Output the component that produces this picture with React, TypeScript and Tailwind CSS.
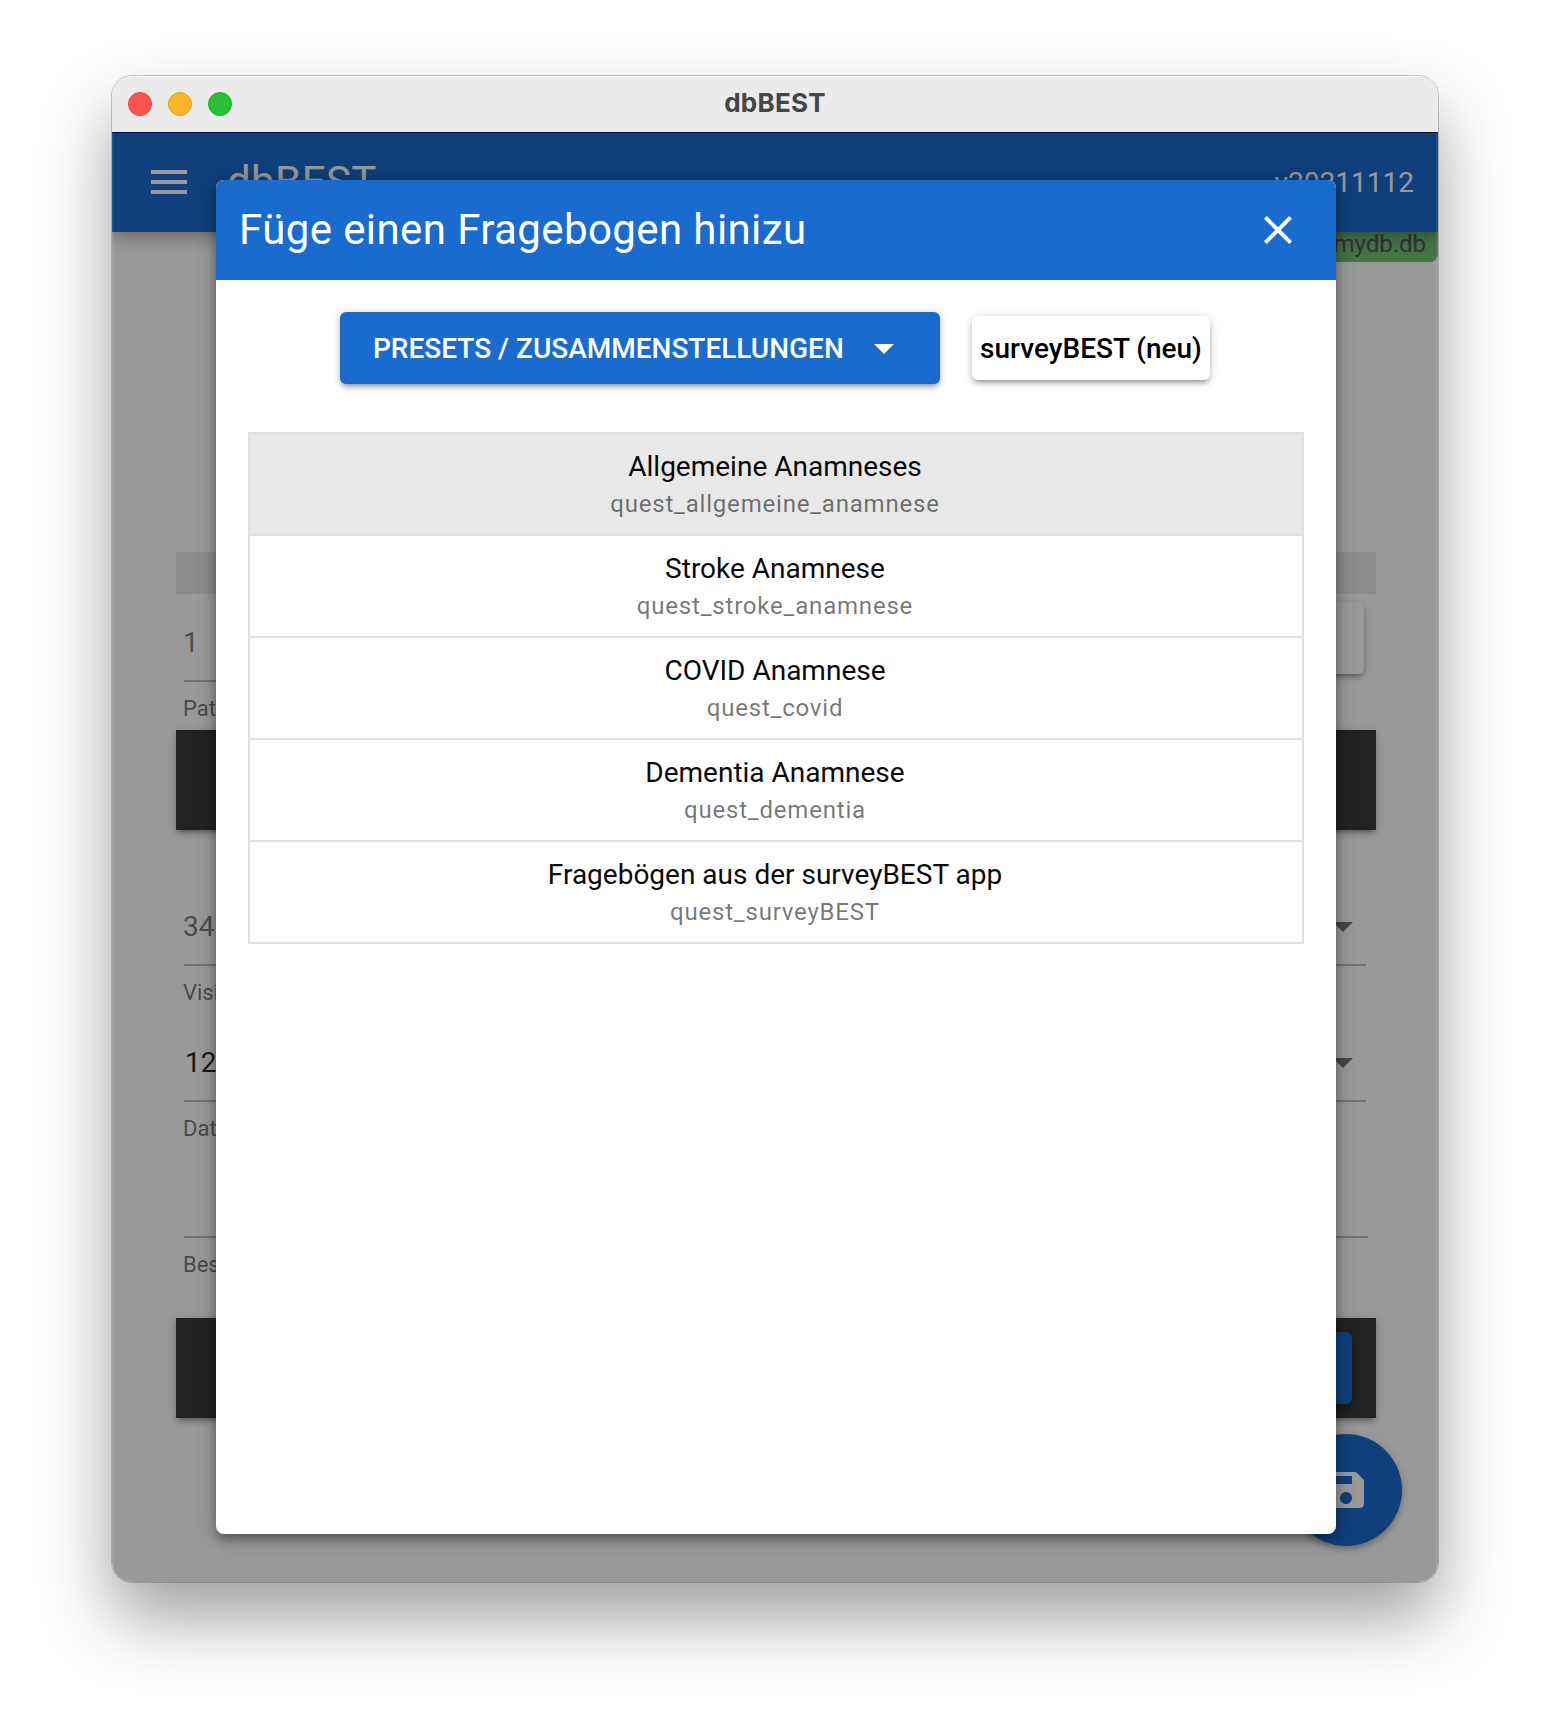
import type { ReactNode } from "react";

const presets = [
  { title: "Allgemeine Anamneses", id: "quest_allgemeine_anamnese" },
  { title: "Stroke Anamnese", id: "quest_stroke_anamnese" },
  { title: "COVID Anamnese", id: "quest_covid" },
  { title: "Dementia Anamnese", id: "quest_dementia" },
  { title: "Fragebögen aus der surveyBEST app", id: "quest_surveyBEST" },
];

function Icon({ d, className = "" }: { d: string; className?: string }) {
  return (
    <svg viewBox="0 0 24 24" className={`size-12 shrink-0 fill-current ${className}`}>
      <path d={d} />
    </svg>
  );
}

const MENU = "M3 18h18v-2H3v2zm0-5h18v-2H3v2zm0-7v2h18V6H3z";
const CLOSE =
  "M19 6.41L17.59 5 12 10.59 6.41 5 5 6.41 10.59 12 5 17.59 6.41 19 12 13.41 17.59 19 19 17.59 13.41 12z";
const DROPDOWN = "M7 10l5 5 5-5z";
const SAVE =
  "M17 3H5c-1.11 0-2 .9-2 2v14c0 1.1.89 2 2 2h14c1.1 0 2-.9 2-2V7l-4-4zm-5 16c-1.66 0-3-1.34-3-3s1.34-3 3-3 3 1.34 3 3-1.34 3-3 3zm3-10H5V5h10v4z";

function TitleBar() {
  return (
    <div className="flex h-14 items-center bg-[#ebebeb] px-4 shadow-[inset_0_1px_0_#f8f8f8]">
      <div className="flex w-40 gap-4">
        <span className="size-6 rounded-full border border-[#e2463f] bg-[#ff544d]" />
        <span className="size-6 rounded-full border border-[#e0a023] bg-[#fdb429]" />
        <span className="size-6 rounded-full border border-[#1dad2b] bg-[#26c138]" />
      </div>
      <div className="flex-1 pb-[2px] text-center font-['Inter'] text-[26px] leading-8 font-bold tracking-[0.01em] text-[#464646]">
        dbBEST
      </div>
      <div className="w-40" />
    </div>
  );
}

function Field({
  value,
  label,
  strong,
  arrow,
  wide,
}: {
  value?: string;
  label: string;
  strong?: boolean;
  arrow?: boolean;
  wide?: boolean;
}) {
  return (
    <div className={`ml-2 h-34 ${wide ? "mr-2" : "mr-[10px]"}`}>
      <div className="flex h-20 items-center justify-between border-b-2 border-black/25 pt-1">
        <span className={`text-[28px] leading-8 ${strong ? "pl-px text-black/87" : "-ml-px text-black/52"}`}>
          {value}
        </span>
        {arrow && <Icon d={DROPDOWN} className="-mt-[2px] -mr-px text-black/54" />}
      </div>
      <div className="-ml-px pt-[14px] text-[22px] leading-[26px] text-black/54">{label}</div>
    </div>
  );
}

function Bar({ children }: { children?: ReactNode }) {
  return (
    <div className="flex h-[100px] items-center justify-end bg-[#3a3a3a] pr-6 shadow-[0_2px_10px_rgba(0,0,0,0.2),0_4px_4px_rgba(0,0,0,0.14),0_6px_2px_-4px_rgba(0,0,0,0.12)]">
      {children}
    </div>
  );
}

function Page() {
  return (
    <div className="flex h-[1450px] flex-col overflow-hidden bg-white">
      <div className="z-10 flex h-[100px] shrink-0 items-center bg-[#1a6bce] pr-6 pl-[33px] text-white shadow-[0_0_20px_4px_rgba(0,0,0,0.2),0_0_20px_rgba(0,0,0,0.24)]">
        <Icon d={MENU} />
        <div className="flex-1 pl-[34px] text-[42px] leading-[42px] tracking-[0.01em]">dbBEST</div>
        <div className="pt-[2px] text-[28px] leading-8">v20211112</div>
      </div>
      <div className="flex h-[30px] shrink-0 justify-end">
        <div className="rounded-b-lg bg-[#76c378] px-3 text-[24px] leading-6 text-[#555555]">mydb.db</div>
      </div>
      <div className="mr-[62px] ml-16 pt-[290px]">
        <div className="h-[42px] bg-[#e9e9e9]" />
        <div className="flex h-34 pt-2">
          <div className="ml-2 flex-1">
            <div className="flex h-20 items-center border-b-2 border-black/25 pt-1 text-[28px] leading-8 text-black/52">
              <span className="-ml-px">1</span>
            </div>
            <div className="-ml-px pt-[14px] text-[22px] leading-[26px] text-black/54">Patient</div>
          </div>
          <div className="mr-3 h-18 w-40 rounded-md bg-white shadow-[0_2px_10px_rgba(0,0,0,0.2),0_4px_4px_rgba(0,0,0,0.14),0_6px_2px_-4px_rgba(0,0,0,0.12)]" />
        </div>
        <Bar />
        <div className="pt-14 pb-6">
          <Field value="34" label="Visite" arrow />
          <Field value="12" label="Datum" strong arrow />
          <Field label="Beschreibung" wide />
        </div>
        <Bar>
          <div className="h-18 w-40 rounded-md bg-[#1a6bce] shadow-[0_4px_10px_rgba(0,0,0,0.4)]" />
        </Bar>
      </div>
      <div className="mt-4 mr-9 flex size-28 shrink-0 items-center justify-center self-end rounded-full bg-[#1a6bce] text-white shadow-[0_2px_10px_rgba(0,0,0,0.2),0_4px_4px_rgba(0,0,0,0.14)]">
        <Icon d={SAVE} />
      </div>
    </div>
  );
}

function Dialog() {
  return (
    <div className="flex h-[1354px] w-[1120px] flex-col overflow-hidden rounded-lg bg-white shadow-[0_4px_8px_-2px_rgba(0,0,0,0.2),0_8px_10px_rgba(0,0,0,0.14),0_2px_20px_rgba(0,0,0,0.3)]">
      <div className="flex h-[100px] items-center justify-between bg-[#1a6bce] pr-[34.5px] pl-[23px] text-white">
        <h1 className="text-[42px] leading-[42px] tracking-[0.4px]">Füge einen Fragebogen hinizu</h1>
        <Icon d={CLOSE} />
      </div>
      <div className="flex items-center justify-center gap-8 pt-8 pr-[2px]">
        <button className="flex h-18 w-[600px] items-center rounded-md bg-[#1a6bce] pl-[33px] text-[28px] leading-8 font-medium text-white shadow-[0_2px_10px_rgba(0,0,0,0.2),0_4px_4px_rgba(0,0,0,0.14),0_6px_2px_-4px_rgba(0,0,0,0.12)]">
          <span className="pt-[2px]">PRESETS / ZUSAMMENSTELLUNGEN</span>
          <Icon d={DROPDOWN} className="ml-4" />
        </button>
        <button className="h-16 w-[238px] rounded-md bg-white pt-[2px] text-[28px] leading-8 font-medium text-black shadow-[0_2px_10px_rgba(0,0,0,0.2),0_4px_4px_rgba(0,0,0,0.14),0_6px_2px_-4px_rgba(0,0,0,0.12)]">
          surveyBEST (neu)
        </button>
      </div>
      <ul className="mx-8 mt-12 divide-y-2 divide-[#e0e0e0] border-2 border-[#e0e0e0] text-center">
        {presets.map((p, i) => (
          <li key={p.id} className={`h-[102px] pt-4 pr-[2px] last:h-[100px] ${i === 0 ? "bg-[#e8e8e8]" : ""}`}>
            <div className="text-[28px] leading-[34px] text-[#0a0a0a]">{p.title}</div>
            <div className="pt-[5px] text-[24px] leading-[30px] tracking-[0.0333em] text-black/54">{p.id}</div>
          </li>
        ))}
      </ul>
    </div>
  );
}

export default function App() {
  return (
    <div className="h-[1730px] w-[1550px] overflow-hidden bg-white pt-[76px] pl-28 font-['Roboto',sans-serif]">
      <div className="h-[1506px] w-[1326px] rounded-[20px] shadow-[0_0_0_1px_rgba(0,0,0,0.2),0_36px_70px_rgba(0,0,0,0.38)]">
        <div className="h-full overflow-hidden rounded-[20px]">
          <TitleBar />
          <div className="relative">
            <Page />
            <div className="absolute inset-0 z-20 flex justify-center border-t border-[#00084a] bg-black/40 pt-[47px] pl-[2px] shadow-[inset_2px_0_0_rgba(255,255,255,0.08),inset_-2px_0_0_rgba(255,255,255,0.08)]">
              <Dialog />
            </div>
          </div>
        </div>
      </div>
    </div>
  );
}
